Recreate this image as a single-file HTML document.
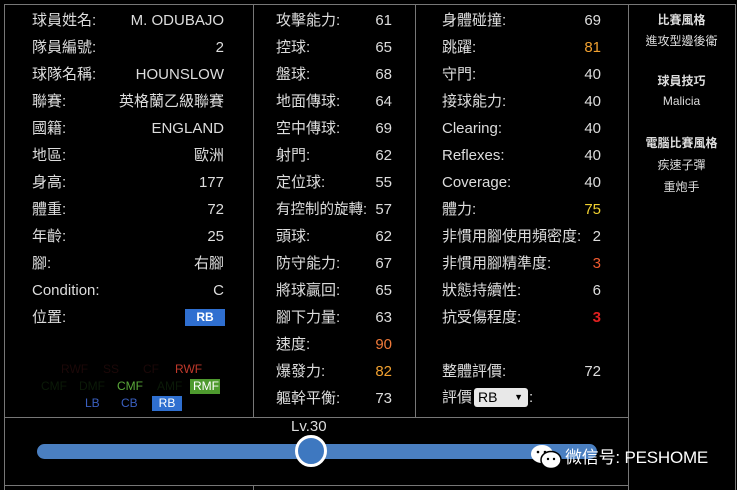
<!DOCTYPE html>
<html><head><meta charset="utf-8"><style>
body{margin:0;width:737px;height:490px;background:#000;overflow:hidden;position:relative;font-family:"Liberation Sans","Noto Sans CJK TC",sans-serif;color:#ddd;font-size:15px}
.l{position:absolute;background:#777}
.t{position:absolute;white-space:nowrap;line-height:18px}
.r{text-align:right}
.p{position:absolute;font-size:12px;line-height:15px;padding:0 3px}
.c{position:absolute;text-align:center;width:107px;left:628px;font-size:12px}
</style></head><body>
<div class="l" style="left:4px;top:4px;width:731px;height:1px"></div>
<div class="l" style="left:4px;top:4px;width:1px;height:486px"></div>
<div class="l" style="left:253px;top:4px;width:1px;height:413px"></div>
<div class="l" style="left:415px;top:4px;width:1px;height:413px"></div>
<div class="l" style="left:628px;top:4px;width:1px;height:486px"></div>
<div class="l" style="left:735px;top:4px;width:1px;height:486px"></div>
<div class="l" style="left:4px;top:417px;width:624px;height:1px"></div>
<div class="l" style="left:4px;top:485px;width:624px;height:1px"></div>
<div class="l" style="left:253px;top:485px;width:1px;height:5px"></div>

<!-- column 1 -->
<div class="t" style="left:32px;top:12px">球員姓名:</div><div class="t r" style="right:513px;top:12px">M. ODUBAJO</div>
<div class="t" style="left:32px;top:39px">隊員編號:</div><div class="t r" style="right:513px;top:39px">2</div>
<div class="t" style="left:32px;top:66px">球隊名稱:</div><div class="t r" style="right:513px;top:66px">HOUNSLOW</div>
<div class="t" style="left:32px;top:93px">聯賽:</div><div class="t r" style="right:513px;top:93px">英格蘭乙級聯賽</div>
<div class="t" style="left:32px;top:120px">國籍:</div><div class="t r" style="right:513px;top:120px">ENGLAND</div>
<div class="t" style="left:32px;top:147px">地區:</div><div class="t r" style="right:513px;top:147px">歐洲</div>
<div class="t" style="left:32px;top:174px">身高:</div><div class="t r" style="right:513px;top:174px">177</div>
<div class="t" style="left:32px;top:201px">體重:</div><div class="t r" style="right:513px;top:201px">72</div>
<div class="t" style="left:32px;top:228px">年齡:</div><div class="t r" style="right:513px;top:228px">25</div>
<div class="t" style="left:32px;top:255px">腳:</div><div class="t r" style="right:513px;top:255px">右腳</div>
<div class="t" style="left:32px;top:282px">Condition:</div><div class="t r" style="right:513px;top:282px">C</div>
<div class="t" style="left:32px;top:309px">位置:</div>
<div class="t" style="left:185px;top:309px;width:40px;height:17px;background:#2f6fd0;color:#fff;font-size:12px;font-weight:bold;text-align:center;line-height:17px">RB</div>

<div class="p" style="left:58px;top:362px;color:#1c0808">RWF</div>
<div class="p" style="left:100px;top:362px;color:#1c0808">SS</div>
<div class="p" style="left:140px;top:362px;color:#1c0808">CF</div>
<div class="p" style="left:172px;top:362px;color:#c0392b">RWF</div>
<div class="p" style="left:38px;top:379px;color:#0b1a08">CMF</div>
<div class="p" style="left:76px;top:379px;color:#0b1a08">DMF</div>
<div class="p" style="left:114px;top:379px;color:#5aa83a">CMF</div>
<div class="p" style="left:154px;top:379px;color:#0b1a08">AMF</div>
<div class="p" style="left:190px;top:379px;background:#4e9a2e;color:#fff;width:24px;text-align:center">RMF</div>
<div class="p" style="left:82px;top:396px;color:#3a5fc0">LB</div>
<div class="p" style="left:118px;top:396px;color:#3a5fc0">CB</div>
<div class="p" style="left:152px;top:396px;background:#2f6fd0;color:#fff;width:24px;text-align:center">RB</div>

<!-- column 2 -->
<div class="t" style="left:276px;top:12px">攻擊能力:</div><div class="t r" style="right:345px;top:12px">61</div>
<div class="t" style="left:276px;top:39px">控球:</div><div class="t r" style="right:345px;top:39px">65</div>
<div class="t" style="left:276px;top:66px">盤球:</div><div class="t r" style="right:345px;top:66px">68</div>
<div class="t" style="left:276px;top:93px">地面傳球:</div><div class="t r" style="right:345px;top:93px">64</div>
<div class="t" style="left:276px;top:120px">空中傳球:</div><div class="t r" style="right:345px;top:120px">69</div>
<div class="t" style="left:276px;top:147px">射門:</div><div class="t r" style="right:345px;top:147px">62</div>
<div class="t" style="left:276px;top:174px">定位球:</div><div class="t r" style="right:345px;top:174px">55</div>
<div class="t" style="left:276px;top:201px;font-size:14.5px">有控制的旋轉:</div><div class="t r" style="right:345px;top:201px">57</div>
<div class="t" style="left:276px;top:228px">頭球:</div><div class="t r" style="right:345px;top:228px">62</div>
<div class="t" style="left:276px;top:255px">防守能力:</div><div class="t r" style="right:345px;top:255px">67</div>
<div class="t" style="left:276px;top:282px">將球贏回:</div><div class="t r" style="right:345px;top:282px">65</div>
<div class="t" style="left:276px;top:309px">腳下力量:</div><div class="t r" style="right:345px;top:309px">63</div>
<div class="t" style="left:276px;top:336px">速度:</div><div class="t r" style="right:345px;top:336px;color:#f07a3a">90</div>
<div class="t" style="left:276px;top:363px">爆發力:</div><div class="t r" style="right:345px;top:363px;color:#f0a030">82</div>
<div class="t" style="left:276px;top:390px">軀幹平衡:</div><div class="t r" style="right:345px;top:390px">73</div>

<!-- column 3 -->
<div class="t" style="left:442px;top:12px">身體碰撞:</div><div class="t r" style="right:136px;top:12px">69</div>
<div class="t" style="left:442px;top:39px">跳躍:</div><div class="t r" style="right:136px;top:39px;color:#f0a030">81</div>
<div class="t" style="left:442px;top:66px">守門:</div><div class="t r" style="right:136px;top:66px">40</div>
<div class="t" style="left:442px;top:93px">接球能力:</div><div class="t r" style="right:136px;top:93px">40</div>
<div class="t" style="left:442px;top:120px">Clearing:</div><div class="t r" style="right:136px;top:120px">40</div>
<div class="t" style="left:442px;top:147px">Reflexes:</div><div class="t r" style="right:136px;top:147px">40</div>
<div class="t" style="left:442px;top:174px">Coverage:</div><div class="t r" style="right:136px;top:174px">40</div>
<div class="t" style="left:442px;top:201px">體力:</div><div class="t r" style="right:136px;top:201px;color:#f0d030">75</div>
<div class="t" style="left:442px;top:228px">非慣用腳使用頻密度:</div><div class="t r" style="right:136px;top:228px">2</div>
<div class="t" style="left:442px;top:255px">非慣用腳精準度:</div><div class="t r" style="right:136px;top:255px;color:#f05a30">3</div>
<div class="t" style="left:442px;top:282px">狀態持續性:</div><div class="t r" style="right:136px;top:282px">6</div>
<div class="t" style="left:442px;top:309px">抗受傷程度:</div><div class="t r" style="right:136px;top:309px;color:#e02020;font-weight:bold">3</div>
<div class="t" style="left:442px;top:363px">整體評價:</div><div class="t r" style="right:136px;top:363px">72</div>
<div class="t" style="left:442px;top:389px">評價</div>
<div style="position:absolute;left:474px;top:388px;width:54px;height:19px;background:#e8e8e8;border-radius:3px;color:#000;font-size:14px;line-height:19px;padding-left:4px;box-sizing:border-box">RB<span style="position:absolute;right:5px;font-size:9px">▼</span></div>
<div class="t" style="left:529px;top:389px">:</div>

<!-- right column -->
<div class="c" style="top:11px;font-weight:bold">比賽風格</div>
<div class="c" style="top:32px">進攻型邊後衛</div>
<div class="c" style="top:72px;font-weight:bold">球員技巧</div>
<div class="c" style="top:94px">Malicia</div>
<div class="c" style="top:134px;font-weight:bold">電腦比賽風格</div>
<div class="c" style="top:156px">疾速子彈</div>
<div class="c" style="top:178px">重炮手</div>

<!-- slider -->
<div class="t" style="left:291px;top:418px;font-size:15px">Lv.30</div>
<div style="position:absolute;left:37px;top:444px;width:560px;height:15px;background:#4a7fc1;border-radius:8px"></div>
<div style="position:absolute;left:295px;top:435px;width:26px;height:26px;border:3px solid #fff;border-radius:50%;background:#3e78c0"></div>
<svg style="position:absolute;left:530px;top:444px" width="32" height="26" viewBox="0 0 32 26"><ellipse cx="12" cy="10" rx="11" ry="9" fill="#fff"/><ellipse cx="21" cy="16" rx="10" ry="8.5" fill="#fff" stroke="#000" stroke-width="1.5"/><circle cx="8" cy="8" r="1.3" fill="#000"/><circle cx="15" cy="8" r="1.3" fill="#000"/><circle cx="18" cy="15" r="1.2" fill="#000"/><circle cx="24" cy="15" r="1.2" fill="#000"/></svg>
<div class="t" style="left:565px;top:448px;color:#fff;font-size:17px;line-height:20px;letter-spacing:-0.2px">微信号: PESHOME</div>
</body></html>
